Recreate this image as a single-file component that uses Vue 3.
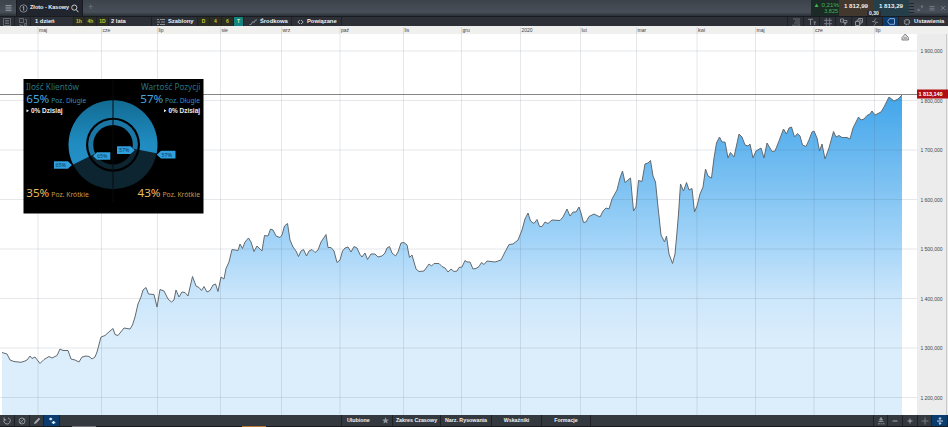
<script setup>
const price = `2,352.5 7,354 10,360 14,361.5 21,362.3 25,361 27,360 30,356 32,358.5 35,357 40,363.5 44,359.5 49,356.5 52,358 57,355.5 60,349 63,350.5 68,350.5 71,359 75,360 79,362 82,357 86,356 89,356.5 92,359 95,357 97,352 101,337 105,335.5 110,331 113,328.5 115,334.5 118,335.5 124,328 130,329 132.5,325 135,317 138,304 141,297 143,290 146,287.5 148.5,294 154,294.5 157,307 160,289.5 164,291 168,299 171.5,302 174,300 176,290 179,297 182,292 185,292.5 188,296 192.5,276.5 196,286 199,287.5 201.5,290.5 204,286.5 207,292 210,290.5 213,285 215.5,284 218,291.5 221,277 224,279 226,268.5 229,262 232,249.5 238,250.5 240,244 242.5,248.5 245,242 248.5,238 251,242 254,251.5 257,246 262,251 264.5,235.5 268,236 270.5,229 273,230 276,236 280,237.5 282,235 284.5,226 287.5,223.5 290,240 293,247 296,251 298.5,256.5 301,251 303.5,249.5 306.5,256 309,251 312,249.5 315,252.5 318,250 321,242 326,234.5 328,247.5 331,247.5 334,251 337,262.5 340,260 342.5,251 345,248 348,247 351,252 354,246.5 357,248 360,254.5 362,257 365,253 367.5,259.5 371,254 375,254 378,257 382,256 385,253 387,248 389.5,246.5 392,253 395.5,256 398,252 401,243 404,242.5 407,245 409.5,257.5 412,255 416,269 419,271.5 424,271 429,264 431.5,266 434,263.5 439,263.5 442,266.5 445,268 448,272 451,269 454,271.5 457,271 459,267.5 462,267 465,260.5 467,262 470,262 473,269 476,268.5 479,266.5 481.5,262.5 484,264.5 487,261 495,262 501,260 505,252 509,244.5 513,244 518,240 522,230 525,219 528,213 530.5,221 534,223.5 537,219.5 539.5,226.5 542,226.5 545,222 548,223.5 552,220 560,220.5 563,217 567,209 570,216 573,212 576,212 579,207 581,213 583.5,222.5 586,222 589,216.5 594,214 600,217 603,211 606,208 609,209 612,199 617,190 620,178 622.5,171 625,182.5 628,180 630.5,178 633.5,211 636,207 638.5,180.5 642,181.5 645,164 648,163 650.5,160.5 653,176 655.5,182 658,207 661,235 664.5,242 666.5,236 669,254 672.5,263.5 675,254 677,232 678.5,214 680.5,184 683.5,191 686.5,182.5 689,190 692,188.5 694.5,212 697,206 700,194 703,187 705.5,169 708,176 711.5,178 714,158 716.5,143 719.5,137 722,142 725,142 728,158 730.5,152.5 734,157 739,134 742,137 745,145 748,146 750,144 753,158 756,151 761,148 764,158 767,143 772,151.5 775,151 779,141 783.5,129 786.5,134 789,128 791.5,127 794.5,137 797.5,133.5 800,136 802.5,145 806,146.5 809,140 812,132 814,131 817,138 819.5,151 822,144 825,159 829,148 833.5,131.5 836,137 839,135.5 842,137.5 847,137.5 850,139 853,128 858.5,117 861,120 864,119 867,115.5 870,114 872,111 875,115 881,112 884,107 886,103 889,97 894,101 898,99 902,95`
const area = `2,415 ${price} 902,415`
const months = [
  [38, 'maj'], [101.5, 'cze'], [157.5, 'lip'], [220.5, 'sie'], [281.5, 'wrz'], [340, 'paź'], [403.5, 'lis'], [461.5, 'gru'],
  [520.5, '2020'], [580.5, 'lut'], [636.5, 'mar'], [697, 'kwi'], [755.5, 'maj'], [814, 'cze'], [874.5, 'lip'],
]
const levels = [
  [51, '1 900,000'], [100.5, '1 800,000'], [150, '1 700,000'], [199.5, '1 600,000'],
  [249, '1 500,000'], [298.5, '1 400,000'], [348, '1 300,000'], [397.5, '1 200,000'],
]
const quick = ['1h', '4h', '1D']
const letters = ['D', '4', '6']
</script>

<template>
  <div class="app">
    <header class="tabs">
      <div class="menu"><svg width="7" height="8" viewBox="0 0 7 8"><path d="M.5 1.5h6M.5 3.2h6M.5 4.9h6M.5 6.6h6" stroke="#8b9097" stroke-width="1" /></svg></div>
      <div class="tab">
        <svg width="9" height="9" viewBox="0 0 9 9"><circle cx="4.5" cy="4.5" r="3.7" fill="none" stroke="#a9adb4" stroke-width=".7" /><path d="M3.7 3.2l1-.6v4" fill="none" stroke="#c6c9ce" stroke-width=".8" /></svg>
        <span>Złoto - Kasowy</span>
        <svg width="8" height="9" viewBox="0 0 8 9"><circle cx="3.3" cy="3.6" r="2.6" fill="none" stroke="#d8dade" stroke-width=".9" /><path d="M5.2 5.7l2.2 2.5" stroke="#d8dade" stroke-width="1" /></svg>
      </div>
      <div class="plus">+</div>
      <div class="quote">
        <div class="change"><span>▲ 0,21%</span><span class="sub">3,825</span></div>
        <div class="bid">1 812,99</div>
        <div class="ask">1 813,29</div>
        <span class="spread">0,30</span>
      </div>
      <div class="window">
        <svg width="6" height="14" viewBox="0 0 6 14"><path d="M0 2.5h5M0 5.5h5M0 8.5h5M0 11.5h5" stroke="#22262c" /></svg>
        <svg width="31" height="8" viewBox="0 0 31 8"><path d="M1 6.5l1.8-1.8M1 4.8v1.7h1.7M5.5 2L3.8 3.700M5.500 3.600V2H3.800M12.500 2.500h5M12.500 4.300h5M12.500 6h5M24 2l4 4M28 2l-4 4" fill="none" stroke="#7e848d" stroke-width=".8" /></svg>
      </div>
    </header>

    <nav class="tools">
      <div class="cell mid"><svg width="8" height="8" viewBox="0 0 8 8"><path d="M.5.5h7v7h-7zM2 2.500h4M2 4h4M2 5.500h4" fill="none" stroke="#7b818a" stroke-width=".7" /></svg></div>
      <div class="cell mid"><svg width="8" height="8" viewBox="0 0 8 8"><path d="M.5.5h4v4h-4zM6 1.500h1.500v4M1 6v1.500h3M5.500 5.500h2v2h-2z" fill="none" stroke="#7b818a" stroke-width=".7" /></svg></div>
      <div class="cell day">1 dzień</div>
      <div v-for="q in quick" :key="q" class="cell mid amber">{{ q }}</div>
      <div class="cell years">2 lata</div>
      <div class="cell icontext">
        <svg width="8" height="8" viewBox="0 0 8 8"><path d="M0 1.500h2M3 1.500h5M0 4h3M4 4h4M0 6.500h2M3 6.500h5" stroke="#8a9098" stroke-width="1" /></svg>
        <span>Szablony</span>
      </div>
      <div v-for="l in letters" :key="l" class="cell mid amber">{{ l }}</div>
      <div class="cell mid teal">T</div>
      <div class="cell icontext">
        <svg width="8" height="8" viewBox="0 0 8 8"><path d="M.5 6.500h1.500L4 3.500l1 1.200L6.500 2H8" fill="none" stroke="#8d929a" /></svg>
        <span>Środkowa</span>
      </div>
      <div class="cell icontext">
        <svg width="7" height="8" viewBox="0 0 7 8"><path d="M3 2L.8 4 3 6M4 2l2.200 2L4 6" fill="none" stroke="#a9adb4" /></svg>
        <span>Powiązane</span>
      </div>
      <div class="cell"></div>
      <div class="cell mid"><svg width="8" height="8" viewBox="0 0 8 8"><path d="M1 1h5M3 3h3M2 5h4M0 7.200h8M7 0v7" stroke="#747b85" stroke-width=".8" /></svg></div>
      <div class="cell mid"><svg width="8" height="8" viewBox="0 0 8 8"><path d="M0 1.300h5M2.500 1v6M5.500 4h2.500M6.700 4v3" stroke="#8a9098" stroke-width=".9" /></svg></div>
      <div class="cell mid"><svg width="8" height="8" viewBox="0 0 8 8"><path d="M2.300 0v8M5.700 0v8M0 2.300h8M0 5.700h8" stroke="#7c828c" stroke-width=".9" /></svg></div>
      <div class="cell mid"><svg width="8" height="8" viewBox="0 0 8 8"><path d="M.5 1h3v3h-3zM4 2.500h3v2H3M4 5.500h2L4.500 7.500" fill="none" stroke="#8a9098" stroke-width=".9" /></svg></div>
      <div class="cell mid"><svg width="8" height="8" viewBox="0 0 8 8"><path d="M.5 3.500h4v4h-4zM2 3V2h4v4H5M3.500 1.500v-1h4v4h-1" fill="none" stroke="#a0a4ab" stroke-width=".8" /></svg></div>
      <div class="cell mid"><svg width="8" height="8" viewBox="0 0 8 8"><path d="M5 .3L2.500 4h3L3 7.700M1 3.500h2M5 4.500h2" fill="none" stroke="#858b94" stroke-width=".8" /></svg></div>
      <div class="cell mid blue"><svg width="8" height="7" viewBox="0 0 8 7"><path d="M2.500.7h5v5.600h-5L.6 3.500z" fill="none" stroke="#8fb9e6" stroke-width=".9" /></svg></div>
      <div class="cell icontext last">
        <svg width="8" height="8" viewBox="0 0 8 8"><circle cx="4" cy="4" r="2.500" fill="none" stroke="#8a9098" stroke-width="1.500" stroke-dasharray="1.400 .56" /></svg>
        <span>Ustawienia</span>
      </div>
    </nav>

    <main class="stage">
      <svg class="chart" width="948" height="389" viewBox="0 26 948 389">
        <defs>
          <linearGradient id="fill" gradientUnits="userSpaceOnUse" x1="0" y1="95" x2="0" y2="345">
            <stop offset="0" stop-color="#41a5ea" />
            <stop offset=".6" stop-color="#a5d5f8" />
            <stop offset=".82" stop-color="#cde7fb" />
            <stop offset="1" stop-color="#dceefc" />
          </linearGradient>
        </defs>
        <rect y="26" width="948" height="389" fill="#fff" />
        <rect y="26" width="948" height="8" fill="#f0f0ee" />
        <polygon :points="area" fill="url(#fill)" />
        <g stroke="#50616f" stroke-opacity=".15" stroke-width="1">
          <path v-for="m in months" :key="m[0]" :d="`M${m[0]} 27V415`" />
          <path v-for="l in levels" :key="l[0]" :d="`M0 ${l[0]}H917`" />
        </g>
        <polyline :points="price" fill="none" stroke="#626a70" stroke-width="1" stroke-linejoin="round" />
        <path d="M0 94.500H917" stroke="#858585" />
        <g class="month"><text v-for="m in months" :key="m[0]" :x="m[0] + 1" y="32.300">{{ m[1] }}</text></g>
        <rect x="917" y="34" width="31" height="381" fill="#ececec" />
        <path d="M946.500 34V415" stroke="#c9c9c9" />
        <g class="level"><text v-for="l in levels" :key="l[0]" x="920.500" :y="l[0] + 2" textLength="22">{{ l[1] }}</text></g>
        <rect x="917" y="89.500" width="31" height="9" fill="#b00d12" />
        <text class="current" x="918.500" y="96" textLength="24">1 813,140</text>
        <path d="M902 37.500L905.200 34l3.200 3.500v2.500H902zM903.500 38h3.500" fill="#ddd" stroke="#777" stroke-width=".9" />
      </svg>

      <svg class="sentiment" width="181" height="135" viewBox="23 79 181 135">
        <defs>
          <linearGradient id="ring" x1="0" y1="0" x2="0" y2="1">
            <stop offset="0" stop-color="#126b92" />
            <stop offset=".65" stop-color="#1f8bc0" />
            <stop offset="1" stop-color="#2490c8" />
          </linearGradient>
        </defs>
        <rect x="23.500" y="79" width="180" height="134.500" fill="#000" />
        <circle cx="113" cy="144.700" r="44.500" fill="#0d2431" />
        <path d="M113 144.700L73.200 164.600A44.500 44.500 0 1 1 156.700 153.200z" fill="url(#ring)" />
        <circle cx="113" cy="144.700" r="27" fill="#000" />
        <circle cx="113" cy="144.700" r="24.800" fill="#0d2431" />
        <path d="M113 144.700L90.800 155.700A24.800 24.800 0 1 1 137.300 149.400z" fill="#1a76a4" />
        <circle cx="113" cy="144.700" r="19.800" fill="#000" />
        <path d="M113 80V202" stroke="#050d12" />
        <g fill="#2f9fdd">
          <path d="M54 161.300h14l3.800 3.700-3.800 3.700H54z" />
          <path d="M110.300 152.300H97l-4 3.700 4 3.700h13.300z" />
          <path d="M117 146.300h13.500l4.200 3.900-4.200 3.700H117z" />
          <path d="M175.500 150.800H161l-4.200 3.900 4.200 3.800h14.500z" />
        </g>
        <g class="tag">
          <text x="55.500" y="167.100">65%</text><text x="97" y="158.100">65%</text>
          <text x="119" y="152.100">57%</text><text x="161.500" y="156.700">57%</text>
        </g>
        <g class="title">
          <text x="26" y="90" textLength="53" lengthAdjust="spacingAndGlyphs">Ilość Klientów</text>
          <text x="141" y="90" textLength="59.500" lengthAdjust="spacingAndGlyphs">Wartość Pozycji</text>
        </g>
        <g class="long">
          <text class="big" x="26.300" y="102.700" textLength="23" lengthAdjust="spacingAndGlyphs">65%</text>
          <text class="small" x="51.300" y="102.500" textLength="35" lengthAdjust="spacingAndGlyphs">Poz. Długie</text>
          <text class="big" x="140.300" y="102.700" textLength="23" lengthAdjust="spacingAndGlyphs">57%</text>
          <text class="small" x="165" y="102.500" textLength="35" lengthAdjust="spacingAndGlyphs">Poz. Długie</text>
        </g>
        <g class="today">
          <text x="31" y="113" textLength="31.500" lengthAdjust="spacingAndGlyphs">0% Dzisiaj</text>
          <text x="168.500" y="113" textLength="31.500" lengthAdjust="spacingAndGlyphs">0% Dzisiaj</text>
          <path d="M26.500 109.300l2.500 1.500-2.500 1.500zM164 109.300l2.500 1.500-2.500 1.500z" />
        </g>
        <g class="short">
          <text class="big" x="26.300" y="197.200" textLength="23" lengthAdjust="spacingAndGlyphs">35%</text>
          <text class="small" x="51.300" y="197" textLength="37.500" lengthAdjust="spacingAndGlyphs">Poz. Krótkie</text>
          <text class="big" x="137.500" y="197.200" textLength="23" lengthAdjust="spacingAndGlyphs">43%</text>
          <text class="small" x="162.500" y="197" textLength="37.500" lengthAdjust="spacingAndGlyphs">Poz. Krótkie</text>
        </g>
      </svg>
    </main>

    <footer class="bottom">
      <div class="cell mid"><svg width="8" height="8" viewBox="0 0 8 8"><path d="M1.500 2.200A3.100 3.100 0 1 0 5 1M1 .5v2.300h2.300" fill="none" stroke="#a5a8ad" stroke-width=".9" /></svg></div>
      <div class="cell mid"><svg width="8" height="8" viewBox="0 0 8 8"><circle cx="4" cy="4" r="3" fill="none" stroke="#999da3" stroke-width=".9" /><path d="M2 6l4-4M2.500 3.500l2 2" stroke="#999da3" stroke-width=".8" /></svg></div>
      <div class="cell mid"><svg width="8" height="8" viewBox="0 0 8 8"><path d="M1 7l.6-2L5.900.7l1.400 1.400L3 6.400z" fill="#a5a8ad" /></svg></div>
      <div class="cell mid blue"><svg width="8" height="8" viewBox="0 0 8 8"><path d="M1.200 2h3M2.700.7v2.600M3.800 5.500h3.500M5.500 4v3" stroke="#d7e9fa" stroke-width="1.300" /></svg></div>
      <div class="cell"></div>
      <div class="cell fav"><span>Ulubione</span><svg width="7" height="7" viewBox="0 0 10 10"><path d="M5 .4l1.300 3.100 3.400.3-2.600 2.200.8 3.300L5 7.500 2.100 9.300l.8-3.300L.3 3.800l3.400-.3z" fill="#92979e" /></svg></div>
      <div class="cell mid">Zakres Czasowy</div>
      <div class="cell mid">Narz. Rysowania</div>
      <div class="cell mid">Wskaźniki</div>
      <div class="cell mid">Formacje</div>
      <div class="cell"></div>
      <div class="cell mid"><svg width="8" height="8" viewBox="0 0 8 8"><path d="M4 .5L2.500 3h3zM1.500 4.500h5M1 6.800h2M3.500 6.800h1.300M5.500 6.800h2" fill="#92979e" stroke="#92979e" stroke-width=".9" /></svg></div>
      <div class="cell mid"><svg width="8" height="8" viewBox="0 0 8 8"><path d="M1.500 4h5" stroke="#a5a8ad" /></svg></div>
      <div class="cell mid"><svg width="8" height="8" viewBox="0 0 8 8"><path d="M1.500 4h5M4 1.500v5" stroke="#a5a8ad" /></svg></div>
      <div class="cell mid"><svg width="8" height="8" viewBox="0 0 8 8"><path d="M.5 4h7M4 .5v7" stroke="#747a82" /></svg></div>
      <div class="cell mid blue"><svg width="8" height="8" viewBox="0 0 8 8"><path d="M1 4h6M4 .5v2.500M4 5v2.500M2.700 2L4 .7 5.300 2M2.700 6L4 7.300 5.300 6" fill="none" stroke="#d5e6f8" stroke-width=".9" /></svg></div>
    </footer>
    <div class="edge"><i></i><i class="active"></i></div>
  </div>
</template>

<style>
body { margin: 0; overflow: hidden; }
</style>

<style scoped>
.app {
  width: 948px;
  height: 427px;
  display: grid;
  grid-template-rows: 16px 10px 389px 11px 1px;
  overflow: hidden;
  background: #20242a;
  color: #f0f1f3;
  font: bold 5.5px/1 "Liberation Sans", sans-serif;
  white-space: nowrap;
}
svg { display: block; flex: none; }
.tabs { display: flex; background: linear-gradient(#3d434b, #484f58 75%, #2b3037); }
.menu { width: 16px; display: flex; align-items: center; justify-content: center; }
.tab {
  width: 63px;
  padding-left: 2px;
  display: flex;
  align-items: center;
  gap: 2px;
  background: #21252d;
  border-right: 1px solid #171a20;
  border-left: 1px solid #171a20;
}
.plus { flex: 1; padding: 3px 0 0 5px; font-size: 9px; font-weight: normal; color: #737a84; }
.quote { position: relative; width: 98px; display: grid; grid-template-columns: 28px 34px 36px; font-size: 6.2px; }
.quote > div { padding-top: 3px; text-align: center; }
.quote > .change { display: flex; flex-direction: column; align-items: flex-end; gap: 1px; padding-top: 2px; background: #1c2a27; color: #43b64f; font-weight: normal; }
.sub { padding-right: 1px; font-size: 5.5px; }
.bid { background: #42382e; }
.ask { background: #243f4a; }
.spread { position: absolute; left: 56px; bottom: 0; padding: 0 2px; background: #252b31; font-size: 5px; line-height: 5px; }
.window { width: 39px; display: flex; align-items: center; gap: 2px; }
.tools, .bottom { display: grid; background: #2d3037; }
.tools {
  height: 10px;
  border-top: 1px solid #181b20;
  box-sizing: border-box;
  font-size: 5.8px;
  grid-template-columns: 15px 16px 43px 11px 12px 12px 43px 46px 12px 12px 12px 10px 48px 50px 446px 16px 16px 16px 16px 15px 16px 16px 49px;
}
.cell { display: flex; align-items: center; overflow: hidden; box-sizing: border-box; border-right: 1px solid #1e2126; }
.mid { justify-content: center; }
.day { padding-left: 4px; }
.years { padding-left: 2px; }
.amber { color: #c9c22e; background: #2d2e23; font-size: 5px; }
.teal { background: #14827e; color: #d3eeb0; font-size: 5px; }
.blue { background: #0b3c70; }
.icontext { padding-left: 5px; gap: 3px; }
.last { padding-left: 4px; border-right: 0; }
.stage { position: relative; }
.sentiment { position: absolute; left: 23px; top: 53px; }
.month { font-size: 5px; font-weight: normal; fill: #444; }
.level { font-size: 5px; font-weight: normal; fill: #444; }
.current { font-size: 5.5px; fill: #fff; }
.sentiment { font-family: "Noto Sans", sans-serif; font-weight: normal; }
.tag { font-size: 5.3px; fill: #0b3b5b; }
.title { font-size: 8.2px; fill: #2b737c; }
.big { font-size: 11.5px; }
.small { font-size: 6.6px; }
.long { fill: #318ec4; }
.long .big { fill: #45a9e2; }
.today { font: bold 6.9px "Liberation Sans", sans-serif; fill: #eee; }
.short { fill: #c79b4e; }
.short .big { fill: #edba63; }
.bottom {
  background: #34383f;
  font-size: 5.3px;
  grid-template-columns: 15px 15px 14px 16px 282px 51px 48px 51px 50px 49px 283px 14px 15px 15px 14px 16px;
}
.fav { padding: 0 3px 0 5px; justify-content: space-between; }
.edge { display: flex; gap: 146px; background: #171a1f; padding-left: 72px; }
.edge i { width: 24px; height: 1px; background: #777; }
.edge .active { background: #b87936; }
</style>
